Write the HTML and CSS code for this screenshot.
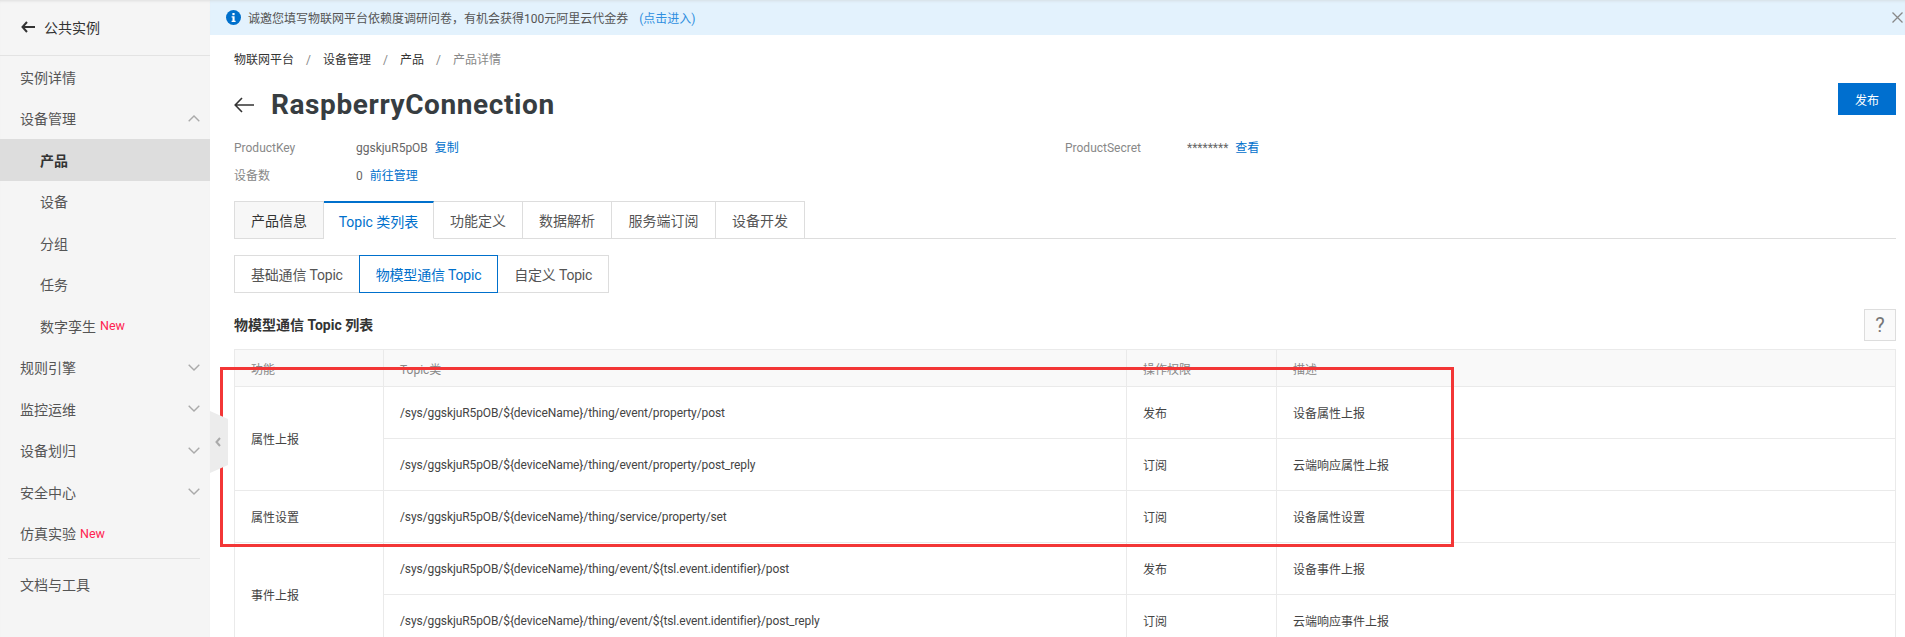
FILE: index.html

```html
<!DOCTYPE html>
<html>
<head>
  <meta charset="utf-8">
  <link rel="stylesheet" href="styles.css">
</head>
<body>
  <div class="layout">
    <aside class="sidebar">
      <div class="side-head">
        <svg class="side-back" width="14" height="12" viewBox="0 0 14 12"><path d="M6 1 1.5 6 6 11M1.5 6H14" fill="none" stroke="#333" stroke-width="2"/></svg>
        <span>公共实例</span>
      </div>
      <nav class="side-nav">
        <div class="nav-item">实例详情</div>
        <div class="nav-item">设备管理
          <svg class="chev" width="12" height="7" viewBox="0 0 12 7"><path d="M.7 6.3 6 1l5.3 5.3" fill="none" stroke="#aaa" stroke-width="1.4"/></svg>
        </div>
        <div class="nav-item sub active">产品</div>
        <div class="nav-item sub">设备</div>
        <div class="nav-item sub">分组</div>
        <div class="nav-item sub">任务</div>
        <div class="nav-item sub">数字孪生 <span class="new">New</span></div>
        <div class="nav-item">规则引擎
          <svg class="chev" width="12" height="7" viewBox="0 0 12 7"><path d="M.7.7 6 6l5.3-5.3" fill="none" stroke="#aaa" stroke-width="1.4"/></svg>
        </div>
        <div class="nav-item">监控运维
          <svg class="chev" width="12" height="7" viewBox="0 0 12 7"><path d="M.7.7 6 6l5.3-5.3" fill="none" stroke="#aaa" stroke-width="1.4"/></svg>
        </div>
        <div class="nav-item">设备划归
          <svg class="chev" width="12" height="7" viewBox="0 0 12 7"><path d="M.7.7 6 6l5.3-5.3" fill="none" stroke="#aaa" stroke-width="1.4"/></svg>
        </div>
        <div class="nav-item">安全中心
          <svg class="chev" width="12" height="7" viewBox="0 0 12 7"><path d="M.7.7 6 6l5.3-5.3" fill="none" stroke="#aaa" stroke-width="1.4"/></svg>
        </div>
        <div class="nav-item">仿真实验 <span class="new">New</span></div>
      </nav>
      <div class="side-foot">文档与工具</div>
      <div class="side-handle">
        <svg width="18" height="62" viewBox="0 0 18 62"><path d="M0 0 18 8V54L0 62Z" fill="#ececec"/><path d="M10 27 6.5 31l3.5 4" fill="none" stroke="#aaa" stroke-width="2"/></svg>
      </div>
    </aside>

    <main class="main">
      <div class="banner">
        <svg class="info-icon" width="15" height="15" viewBox="0 0 15 15"><circle cx="7.5" cy="7.5" r="7.5" fill="#0070cc"/><rect x="6.4" y="3" width="2.2" height="2.2" fill="#fff"/><path d="M5.6 6.2H8.6V10.8H9.6V12H5.6V10.8H6.5V7.4H5.6Z" fill="#fff"/></svg>
        <span>诚邀您填写物联网平台依赖度调研问卷，有机会获得100元阿里云代金券</span>
        <a class="banner-link">(点击进入)</a>
        <svg class="banner-close" width="11" height="11" viewBox="0 0 11 11"><path d="M.5.5l10 10M10.5.5l-10 10" stroke="#888" stroke-width="1.3"/></svg>
      </div>

      <div class="content">
        <div class="crumbs">
          <span>物联网平台</span><i>/</i><span>设备管理</span><i>/</i><span>产品</span><i>/</i><span class="crumb-last">产品详情</span>
        </div>

        <div class="title-row">
          <div class="title">
            <svg width="20" height="16" viewBox="0 0 20 16"><path d="M8 1 1.2 8 8 15M1.2 8H20" fill="none" stroke="#333" stroke-width="1.6"/></svg>
            <h1>RaspberryConnection</h1>
          </div>
          <button class="btn-primary">发布</button>
        </div>

        <div class="meta">
          <div class="meta-row">
            <span class="meta-label">ProductKey</span>
            <span class="meta-value">ggskjuR5pOB</span><a class="link">复制</a>
          </div>
          <div class="meta-row">
            <span class="meta-label">ProductSecret</span>
            <span class="meta-value">********</span><a class="link">查看</a>
          </div>
          <div class="meta-row">
            <span class="meta-label">设备数</span>
            <span class="meta-value">0</span><a class="link">前往管理</a>
          </div>
        </div>

        <div class="tabs">
          <div class="tab first">产品信息</div>
          <div class="tab active">Topic 类列表</div>
          <div class="tab">功能定义</div>
          <div class="tab">数据解析</div>
          <div class="tab wide">服务端订阅</div>
          <div class="tab">设备开发</div>
        </div>

        <div class="subtabs">
          <div class="subtab">基础通信 Topic</div>
          <div class="subtab active">物模型通信 Topic</div>
          <div class="subtab">自定义 Topic</div>
        </div>

        <div class="section-head">
          <h2>物模型通信 Topic 列表</h2>
          <button class="help">?</button>
        </div>

        <table class="topics">
          <colgroup>
            <col class="col-fn"><col class="col-topic"><col class="col-perm"><col>
          </colgroup>
          <thead>
            <tr><th>功能</th><th>Topic类</th><th>操作权限</th><th>描述</th></tr>
          </thead>
          <tbody>
            <tr>
              <td rowspan="2">属性上报</td>
              <td class="path">/sys/ggskjuR5pOB/${deviceName}/thing/event/property/post</td>
              <td>发布</td><td>设备属性上报</td>
            </tr>
            <tr>
              <td class="path">/sys/ggskjuR5pOB/${deviceName}/thing/event/property/post_reply</td>
              <td>订阅</td><td>云端响应属性上报</td>
            </tr>
            <tr>
              <td>属性设置</td>
              <td class="path">/sys/ggskjuR5pOB/${deviceName}/thing/service/property/set</td>
              <td>订阅</td><td>设备属性设置</td>
            </tr>
            <tr>
              <td rowspan="2">事件上报</td>
              <td class="path">/sys/ggskjuR5pOB/${deviceName}/thing/event/${tsl.event.identifier}/post</td>
              <td>发布</td><td>设备事件上报</td>
            </tr>
            <tr>
              <td class="path">/sys/ggskjuR5pOB/${deviceName}/thing/event/${tsl.event.identifier}/post_reply</td>
              <td>订阅</td><td>云端响应事件上报</td>
            </tr>
          </tbody>
        </table>
      </div>
    </main>
  </div>

  <div class="red-box"></div>
</body>
</html>
```

FILE: styles.css

```css
* {
  margin: 0;
  padding: 0;
  box-sizing: border-box;
}

html, body {
  height: 637px;
  overflow: hidden;
}

body {
  position: relative;
  font-family: Roboto, "Noto Sans CJK SC", sans-serif;
  font-size: 12px;
  color: #333;
  background: #fff;
}

.layout {
  display: flex;
  height: 637px;
}

/* sidebar */
.sidebar {
  position: relative;
  width: 210px;
  flex: none;
  background: #f5f5f5;
  box-shadow: inset 0 3px 3px -2px #ddd;
  color: #555;
  font-size: 14px;
}

.side-head {
  display: flex;
  align-items: center;
  gap: 9px;
  height: 56px;
  padding: 0 0 2px 21px;
  border-bottom: 1px solid #e3e3e3;
  color: #333;
}

.side-nav {
  padding-bottom: 4px;
}

.nav-item {
  display: flex;
  align-items: center;
  gap: 4px;
  position: relative;
  height: 41.5px;
  padding-left: 20px;
}

.nav-item.sub {
  padding-left: 40px;
}

.nav-item.active {
  background: #ddd;
  color: #333;
  font-weight: 700;
}

.chev {
  position: absolute;
  right: 10px;
  top: 17px;
}

.new {
  color: #ff2251;
  font-size: 12.5px;
}

.side-foot {
  margin: 0 10px 0 8px;
  padding: 14px 0 0 12px;
  border-top: 1px solid #e3e3e3;
  line-height: 24px;
}

.side-handle {
  position: absolute;
  left: 210px;
  top: 411px;
  width: 18px;
  height: 62px;
  z-index: 2;
}

/* main */
.main {
  flex: 1;
  min-width: 0;
}

.banner {
  display: flex;
  align-items: center;
  position: relative;
  height: 35px;
  padding-left: 16px;
  background: #e3f2fd;
  box-shadow: inset 0 3px 3px -2px #d5dde3;
  color: #555;
}

.info-icon {
  margin-right: 7px;
}

.banner-link {
  margin-left: 11px;
  color: #2f8fe0;
}

.banner-close {
  position: absolute;
  right: 2px;
  top: 12px;
}

.content {
  padding: 15px 9px 0 24px;
}

.crumbs {
  display: flex;
  line-height: 20px;
}

.crumbs i {
  width: 29px;
  text-align: center;
  font-style: normal;
  color: #888;
}

.crumb-last {
  color: #888;
}

.title-row {
  display: flex;
  justify-content: space-between;
  align-items: flex-start;
  margin-top: 13px;
  height: 51px;
}

.title {
  display: flex;
  align-items: center;
  gap: 17px;
  padding-top: 5px;
}

.title svg {
  flex: none;
}

.title h1 {
  font-size: 28px;
  font-weight: 700;
  line-height: 34px;
  letter-spacing: .6px;
  color: #373d41;
}

.btn-primary {
  width: 58px;
  height: 32px;
  border: none;
  background: #006fcf;
  color: #fff;
  font: inherit;
}

.meta {
  display: grid;
  grid-template-columns: 831px 1fr;
  line-height: 28px;
}

.meta-row {
  display: flex;
}

.meta-label {
  width: 122px;
  color: #888;
}

.meta-value {
  color: #666;
  margin-right: 7px;
}

.link {
  color: #0070cc;
}

.tabs {
  display: flex;
  margin-top: 11px;
  height: 38px;
  border-bottom: 1px solid #ddd;
}

.tab {
  display: flex;
  align-items: center;
  justify-content: center;
  width: 89px;
  height: 38px;
  border: 1px solid #ddd;
  border-left: none;
  font-size: 14px;
  white-space: nowrap;
  color: #555;
}

.tab.first {
  border-left: 1px solid #ddd;
  background: #f7f7f7;
  color: #333;
  width: 90px;
}

.tab.active {
  width: 110px;
  border-top: 2px solid #0070cc;
  border-bottom-color: #fff;
  color: #0070cc;
}

.tab.wide {
  width: 104px;
}

.subtabs {
  display: flex;
  margin-top: 16px;
}

.subtab {
  display: flex;
  align-items: center;
  justify-content: center;
  height: 38px;
  padding: 0 16px;
  border: 1px solid #ddd;
  margin-left: -1px;
  font-size: 14px;
  letter-spacing: -.2px;
  white-space: nowrap;
  color: #555;
}

.subtab:first-child {
  margin-left: 0;
}

.subtab.active {
  position: relative;
  border-color: #0070cc;
  color: #0070cc;
}

.section-head {
  display: flex;
  align-items: flex-start;
  justify-content: space-between;
  margin-top: 16px;
  height: 40px;
}

.section-head h2 {
  margin-top: 6px;
  font-size: 14px;
  font-weight: 700;
  line-height: 20px;
}

.help {
  width: 32px;
  height: 32px;
  border: 1px solid #ddd;
  background: #fafafa;
  color: #777;
  font: 20px Roboto, sans-serif;
}

.topics {
  width: 100%;
  table-layout: fixed;
  border-collapse: collapse;
}

.col-fn { width: 149px; }
.col-topic { width: 743px; }
.col-perm { width: 150px; }

.topics th, .topics td {
  padding: 0 16px;
  border: 1px solid #eaeaea;
  text-align: left;
  font-weight: 400;
}

.topics th {
  height: 37px;
  background: #f9f9f9;
  color: #888;
}

.topics td {
  height: 52px;
  color: #444;
}

.topics .path {
  letter-spacing: -.09px;
}

/* annotation drawn on top of the screenshot */
.red-box {
  position: absolute;
  left: 220px;
  top: 367px;
  width: 1234px;
  height: 180px;
  border: 3px solid #f33636;
}
```
